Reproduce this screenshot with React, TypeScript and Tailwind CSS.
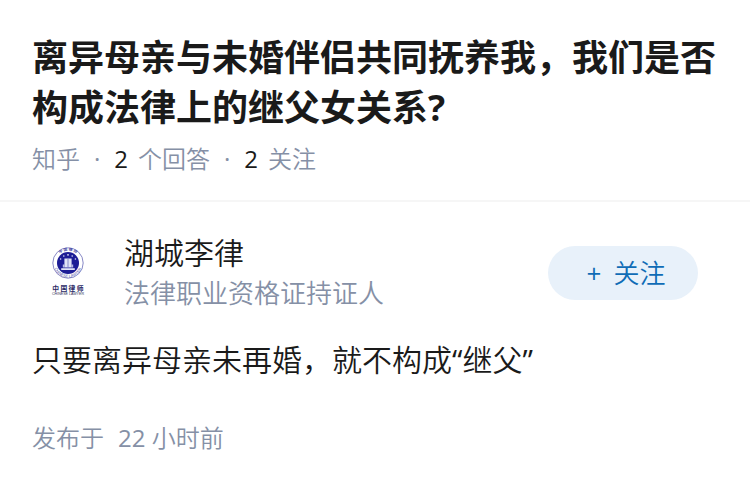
import React from "react";

function LawyerEmblem() {
  return (
    <svg viewBox="0 0 72 72" className="size-full" role="img" aria-label="中国律师">
      <defs>
        <path id="ring-top" d="M23.6 26 A12.4 12.4 0 0 1 48.4 26" />
        <path id="ring-bottom" d="M21.5 26 A14.5 14.5 0 0 0 50.5 26" />
      </defs>
      <circle cx="36" cy="26" r="15.2" fill="#fff" stroke="#7a7cc0" strokeWidth="0.9" />
      <circle cx="36" cy="26" r="11" fill="#1c1c96" />
      <g fill="#4c4ca6">
        <text
          fontSize="3.8"
          fontWeight="700"
          textAnchor="middle"
          fontFamily="'Noto Sans CJK SC',sans-serif"
        >
          <textPath href="#ring-top" startOffset="50%">中 国 律 师</textPath>
        </text>
        <text
          fontSize="3.8"
          fontWeight="400"
          textAnchor="middle"
          fontFamily="'Liberation Sans',sans-serif"
        >
          <textPath href="#ring-bottom" startOffset="50%">CHINESE LAWYER</textPath>
        </text>
      </g>
      <g fill="#dfe2f6">
        <path d="M32.4 21.5h7.2v9h-7.2z" />
        <path d="M30.8 27.5h1.6v3h-1.6zM41.2 27.5h-1.6v3h1.6z" opacity="0.8" />
        <path d="M29.2 31.2h13.6v1.8H29.2z" />
        <circle cx="36" cy="17.8" r="0.9" />
        <circle cx="31.8" cy="19" r="0.8" />
        <circle cx="40.2" cy="19" r="0.8" />
        <circle cx="28.6" cy="22" r="0.8" />
        <circle cx="43.4" cy="22" r="0.8" />
      </g>
      <path d="M36 22v8.5" stroke="#7b7fc4" strokeWidth="0.9" />
      <text
        x="20.2 28.4 36.6 44.8"
        y="53.8"
        fontSize="6.8"
        fontWeight="700"
        fill="#2b2b66"
        fontFamily="'Noto Sans CJK SC',sans-serif"
      >
        中国律师
      </text>
      <text
        x="36"
        y="58"
        fontSize="3.6"
        fontWeight="400"
        textAnchor="middle"
        fill="#33335c"
        fontFamily="'Liberation Sans',sans-serif"
      >
        CHINESE LAWYER
      </text>
    </svg>
  );
}

export default function App() {
  return (
    <main
      lang="zh-CN"
      className="min-h-screen bg-white font-['Open_Sans','Noto_Sans_CJK_SC',sans-serif] font-[350] text-[#1a1a1a]"
    >
      <header className="border-b-2 border-[#f6f6f6] px-8 pt-[33px] pb-[23px]">
        <h1 className="text-4xl leading-[50px] font-bold">
          离异母亲与未婚伴侣共同抚养我，我们是否构成法律上的继父女关系?
        </h1>
        <div className="mt-2 flex items-center gap-3.5 text-2xl leading-9 text-[#8590a6]">
          <span>知乎</span>
          <span className="font-normal">·</span>
          <span className="flex gap-2.5">
            <span className="font-normal text-[#1a1a1a]">2</span>
            <span>个回答</span>
          </span>
          <span className="font-normal">·</span>
          <span className="flex gap-2.5">
            <span className="font-normal text-[#1a1a1a]">2</span>
            <span>关注</span>
          </span>
        </div>
      </header>

      <article className="px-8 pt-[31px]">
        <div className="flex items-center gap-5 pr-5">
          <div className="size-[72px] shrink-0">
            <LawyerEmblem />
          </div>
          <div className="min-w-0 flex-1">
            <h2 className="text-3xl leading-10">湖城李律</h2>
            <p className="text-[26px] leading-10 text-[#8590a6]">法律职业资格证持证人</p>
          </div>
          <button
            type="button"
            className="flex h-[54px] w-[150px] shrink-0 items-center justify-center gap-3 rounded-full bg-[#e8f1fa] pl-1.5 text-[26px] text-[#0f6cb6]"
          >
            <span className="font-normal">+</span>
            <span>关注</span>
          </button>
        </div>
        <p className="mt-[22px] text-3xl leading-[50px]">
          只要离异母亲未再婚，就不构成<span className="font-normal">“</span>继父
          <span className="font-normal">”</span>
        </p>
        <p className="mt-[35px] flex gap-3.5 text-2xl leading-9 text-[#8590a6]">
          <span>发布于</span>
          <time>
            <span className="font-normal">22</span> 小时前
          </time>
        </p>
      </article>
    </main>
  );
}
